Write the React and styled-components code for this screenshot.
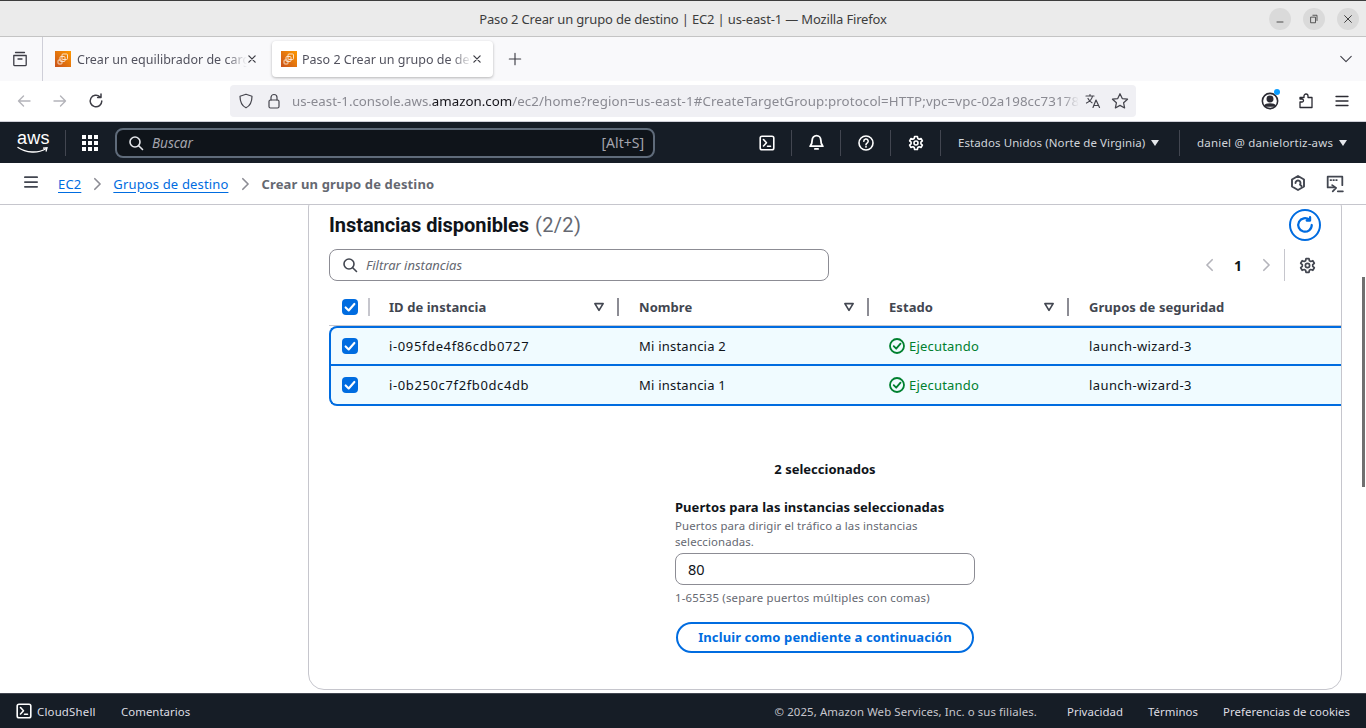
import React from "react";
import styled, { createGlobalStyle } from "styled-components";

const Global = createGlobalStyle`
  html, body { margin: 0; padding: 0; height: 100%; background: #fff; overflow: hidden; }
  * { box-sizing: border-box; }
`;

const BASE_FONT = `"Noto Sans", "Open Sans", sans-serif`;

const Page = styled.div`
  width: 1366px;
  height: 728px;
  display: flex;
  flex-direction: column;
  position: relative;
  overflow: hidden;
  font-family: ${BASE_FONT};
  color: #0f141a;
`;

/* browser window */
const TitleBar = styled.div`
  height: 37px;
  flex: none;
  background: #ebebeb;
  border-top: 1px solid #3d3d3d;
  border-bottom: 1px solid #c4c4c4;
  display: flex;
  align-items: center;
  justify-content: center;
  position: relative;
  font-size: 13px;
  letter-spacing: -0.16px;
  color: #3d3d3d;
`;
const WindowButtons = styled.div`
  position: absolute;
  right: 7px;
  top: 7px;
  display: flex;
  gap: 12px;
`;
const WindowButton = styled.div`
  width: 22px;
  height: 22px;
  border-radius: 50%;
  background: #dadada;
  display: flex;
  align-items: center;
  justify-content: center;
`;
const TabStrip = styled.div`
  height: 44px;
  flex: none;
  background: #f9f9fb;
  display: flex;
  align-items: stretch;
  font-size: 12.5px;
  color: #52525e;
`;
const TabSide = styled.div`
  width: 43px;
  border-right: 1px solid #cfcfd8;
  display: flex;
  align-items: center;
  justify-content: center;
  padding-right: 3px;
`;
const Tab = styled.div`
  width: ${p => p.$width}px;
  margin: 4px 0 4px ${p => p.$gap}px;
  border-radius: 4px;
  padding: 0 11px 0 ${p => p.$pad}px;
  display: flex;
  align-items: center;
  background: ${p => (p.$active ? "#fff" : "transparent")};
  box-shadow: ${p => (p.$active ? "0 1px 3px rgba(0,0,0,.28)" : "none")};
`;
const TabLabel = styled.span`
  flex: 1;
  margin-left: ${p => p.$gap}px;
  white-space: nowrap;
  overflow: hidden;
  -webkit-mask-image: linear-gradient(to right, #000 88%, transparent);
  mask-image: linear-gradient(to right, #000 88%, transparent);
`;
const NewTab = styled.div`
  width: 44px;
  display: flex;
  align-items: center;
  justify-content: center;
`;
const TabEnd = styled.div`
  margin-left: auto;
  width: 40px;
  display: flex;
  align-items: center;
  justify-content: center;
`;
const NavBar = styled.div`
  height: 41px;
  flex: none;
  background: #fff;
  border-bottom: 1px solid #cfcfd8;
  display: flex;
  align-items: center;
`;
const NavButton = styled.div`
  width: 36px;
  height: 32px;
  display: flex;
  align-items: center;
  justify-content: center;
  position: relative;
`;
const NavLeft = styled.div`
  display: flex;
  width: 230px;
  padding-left: 6px;
`;
const UrlBar = styled.div`
  width: 906px;
  height: 32px;
  background: #f0f0f4;
  border-radius: 4px;
  display: flex;
  align-items: center;
  padding: 0 7px 0 8px;
  font-size: 13.3px;
  color: #8a8a92;
`;
const UrlIcons = styled.div`
  display: flex;
  align-items: center;
  gap: 12px;
  width: 54px;
  flex: none;
`;
const UrlText = styled.div`
  flex: 1;
  min-width: 0;
  white-space: nowrap;
  overflow: hidden;
  -webkit-mask-image: linear-gradient(to right, #000 98%, transparent);
  mask-image: linear-gradient(to right, #000 98%, transparent);
  b { font-weight: 400; color: #15141a; }
`;
const UrlPath = styled.span`
  letter-spacing: 0.12px;
`;
const UrlTrail = styled.div`
  display: flex;
  align-items: center;
  gap: 10px;
  margin-left: 6px;
  flex: none;
`;
const NavRight = styled.div`
  margin-left: auto;
  display: flex;
  padding-right: 6px;
`;
const Dot = styled.span`
  position: absolute;
  top: 4px;
  right: 8px;
  width: 6px;
  height: 6px;
  border-radius: 50%;
  background: #0a9dff;
`;

/* aws console header */
const TopNav = styled.div`
  height: 41px;
  flex: none;
  background: #161d26;
  display: flex;
  align-items: center;
  color: #d1d5db;
  font-size: 11.5px;
`;
const LogoBox = styled.div`
  width: 66px;
  height: 26px;
  padding-left: 17px;
  border-right: 1px solid #424650;
  flex: none;
`;
const LogoWord = styled.div`
  font-family: "Liberation Sans", sans-serif;
  font-size: 18px;
  line-height: 15px;
  color: #fff;
  letter-spacing: 0.2px;
  margin-top: 1px;
`;
const GridBox = styled.div`
  width: 49px;
  padding-right: 1px;
  display: flex;
  justify-content: center;
  flex: none;
`;
const SearchBox = styled.div`
  width: 540px;
  height: 30px;
  flex: none;
  background: #0f141a;
  border: 2px solid #5f6b7a;
  border-radius: 8px;
  display: flex;
  align-items: center;
  padding: 0 9px 0 11px;
  font-size: 13.5px;
  color: #a4a4ad;
`;
const SearchHint = styled.i`
  margin-left: 8px;
  flex: 1;
`;
const SearchKeys = styled.span`
  font-size: 14px;
`;
const NavIcons = styled.div`
  display: flex;
  align-items: center;
  margin-left: 87px;
`;
const NavIcon = styled.div`
  width: 50px;
  height: 26px;
  display: flex;
  align-items: center;
  justify-content: center;
  border-right: 1px solid #424650;
  &:nth-child(2) { width: 49px; }
`;
const NavMenu = styled.div`
  height: 26px;
  display: flex;
  align-items: center;
  white-space: nowrap;
  padding-left: ${p => p.$pad}px;
  width: ${p => p.$width}px;
  letter-spacing: ${p => p.$track}px;
  border-right: ${p => (p.$sep ? "1px solid #424650" : "none")};
`;
const Caret = styled.span`
  width: 0;
  height: 0;
  margin-left: ${p => p.$gap}px;
  border-left: 4.5px solid transparent;
  border-right: 4.5px solid transparent;
  border-top: 6px solid #e5e7eb;
`;

/* breadcrumbs */
const Breadcrumbs = styled.div`
  height: 42px;
  flex: none;
  background: #fff;
  border-bottom: 1px solid #c6c6cd;
  display: flex;
  align-items: center;
  padding-left: 24px;
  font-size: 13px;
  letter-spacing: 0.15px;
`;
const MenuToggle = styled.div`
  margin: 0 20px 4px 0;
`;
const Crumb = styled.a`
  color: #006ce0;
  text-decoration: underline;
  text-underline-offset: 3px;
`;
const CrumbCurrent = styled.span`
  color: #656871;
  font-weight: 700;
`;
const CrumbSep = styled.div`
  width: ${p => p.$width}px;
  display: flex;
  justify-content: center;
`;
const BreadcrumbIcons = styled.div`
  margin-left: auto;
  display: flex;
  gap: 20px;
  padding-right: 22px;
`;

/* content */
const Main = styled.main`
  flex: 1;
  min-height: 0;
  background: #fff;
  overflow: hidden;
  padding: 0 24px 0 308px;
`;
const Card = styled.section`
  height: 499px;
  margin-top: -14px;
  border: 1px solid #c6c6cd;
  border-radius: 16px;
  background: #fff;
  padding: 17px 0 0 20px;
  overflow: hidden;
`;
const CardHead = styled.div`
  height: 32px;
  display: flex;
  align-items: center;
  justify-content: space-between;
  padding-right: 20px;
`;
const Title = styled.h2`
  margin: 0;
  font-family: Roboto, ${BASE_FONT};
  font-size: 20px;
  font-weight: 700;
  letter-spacing: -0.05px;
  color: #0f141a;
  span { font-weight: 400; color: #656871; letter-spacing: 0.35px; margin-left: 1px; }
`;
const RefreshButton = styled.div`
  width: 32px;
  height: 32px;
  border: 2px solid #006ce0;
  border-radius: 50%;
  display: flex;
  align-items: center;
  justify-content: center;
`;
const Tools = styled.div`
  margin-top: 8px;
  height: 32px;
  display: flex;
  align-items: center;
  justify-content: space-between;
`;
const FilterBox = styled.div`
  width: 500px;
  height: 32px;
  border: 1px solid #8c8c94;
  border-radius: 8px;
  display: flex;
  align-items: center;
  gap: 8px;
  padding-left: 12px;
  font-size: 13px;
  font-style: italic;
  color: #656871;
`;
const Pager = styled.div`
  display: flex;
  align-items: center;
  height: 32px;
  padding-right: 25px;
  font-size: 14px;
  font-weight: 700;
`;
const PageNumber = styled.span`
  width: 42px;
  text-align: center;
`;
const PagerGear = styled.div`
  margin-left: 11px;
  height: 32px;
  padding-left: 14px;
  border-left: 1px solid #c6c6cd;
  display: flex;
  align-items: center;
`;
const Table = styled.div`
  margin-top: 8px;
`;
const HeadRow = styled.div`
  display: grid;
  grid-template-columns: 60px 250px 250px 200px 1fr;
  height: 37px;
  border-bottom: 1px solid #c6c6cd;
  font-size: 13px;
  font-weight: 700;
  letter-spacing: 0.06px;
  color: #424650;
`;
const HeadCell = styled.div`
  display: flex;
  align-items: center;
  justify-content: space-between;
  padding-right: 20px;
`;
const HeadCheck = styled.div`
  display: flex;
  align-items: center;
  gap: 10px;
  padding-left: 13px;
`;
const ColumnSep = styled.span`
  width: 2px;
  height: 18px;
  background: ${p => (p.$dark ? "#8c8c94" : "#c6c6cd")};
`;
const SortGroup = styled.span`
  display: flex;
  align-items: center;
  gap: 12px;
`;
const Row = styled.div`
  display: grid;
  grid-template-columns: 58px 250px 250px 200px 1fr;
  height: ${p => (p.$last ? 42 : 40)}px;
  margin-top: ${p => (p.$last ? -2 : 0)}px;
  background: #f0fbff;
  border: 2px solid #006ce0;
  border-right: none;
  border-radius: ${p => (p.$last ? "0 0 0 8px" : "8px 0 0 0")};
  align-items: center;
  font-size: 13px;
  color: #0f141a;
`;
const RowCheck = styled.div`
  display: flex;
  padding-left: 11px;
`;
const Cell = styled.div`
  letter-spacing: ${p => p.$track}px;
`;
const CheckBox = styled.div`
  width: 16px;
  height: 16px;
  border-radius: 4px;
  background: #006ce0;
  display: flex;
  align-items: center;
  justify-content: center;
`;
const Status = styled.div`
  display: flex;
  align-items: center;
  gap: 4px;
  letter-spacing: 0.2px;
  color: #00802f;
`;
const Selected = styled.div`
  margin-top: 54px;
  padding-right: 20px;
  text-align: center;
  font-size: 13px;
  font-weight: 700;
  line-height: 18px;
`;
const Form = styled.div`
  width: 300px;
  margin: 20px 0 0 346px;
`;
const FieldLabel = styled.div`
  font-size: 13px;
  font-weight: 700;
  line-height: 18px;
  letter-spacing: 0.05px;
`;
const FieldHelp = styled.div`
  font-size: 11.4px;
  line-height: 16px;
  letter-spacing: 0.12px;
  color: #656871;
  margin-top: 2px;
`;
const PortInput = styled.div`
  margin-top: 3px;
  height: 32px;
  border: 1px solid #8c8c94;
  border-radius: 8px;
  display: flex;
  align-items: center;
  padding: 0 0 1px 12px;
  font-size: 14.5px;
`;
const FieldHint = styled.div`
  margin-top: 5px;
  font-size: 11.4px;
  line-height: 16px;
  letter-spacing: 0.2px;
  color: #656871;
`;
const PrimaryOutline = styled.div`
  margin: 16px 1px 0;
  height: 31px;
  padding-bottom: 1px;
  border: 2px solid #006ce0;
  border-radius: 20px;
  color: #006ce0;
  font-size: 13px;
  font-weight: 700;
  letter-spacing: 0.1px;
  display: flex;
  align-items: center;
  justify-content: center;
`;

/* footer */
const Footer = styled.footer`
  height: 35px;
  flex: none;
  background: #161d26;
  border-top: 1px solid #424650;
  display: flex;
  align-items: center;
  padding: 0 16px;
  font-size: 11.4px;
  letter-spacing: 0.05px;
  color: #dedee3;
`;
const FooterShell = styled.div`
  display: flex;
  align-items: center;
  gap: 5px;
  width: 105px;
  letter-spacing: 0.2px;
`;
const FooterRight = styled.div`
  margin-left: auto;
  display: flex;
  gap: 25px;
  span:first-child { color: #c6c6cd; margin-right: 5px; letter-spacing: 0.1px; }
`;
const Scrollbar = styled.div`
  position: absolute;
  right: 1px;
  top: 277px;
  width: 3px;
  height: 210px;
  background: #707070;
`;

const Ic = ({ size = 16, children, stroke = "#5b5b66", sw = 1.4, fill = "none" }) => (
  <svg width={size} height={size} viewBox="0 0 16 16" fill={fill} stroke={stroke} strokeWidth={sw} strokeLinecap="round" strokeLinejoin="round" style={{ display: "block", flex: "none" }}>
    {children}
  </svg>
);

const Favicon = () => (
  <svg width="16" height="16" viewBox="0 0 16 16" style={{ display: "block", flex: "none" }}>
    <defs>
      <linearGradient id="ec2" x1="0" y1="1" x2="1" y2="0">
        <stop offset="0" stopColor="#c8511b" />
        <stop offset="1" stopColor="#ff9900" />
      </linearGradient>
    </defs>
    <rect width="16" height="16" fill="url(#ec2)" />
    <g fill="none" stroke="#fff" strokeWidth="0.9" opacity="0.85">
      <rect x="7" y="3" width="5.500" height="5.500" rx="1" />
      <rect x="5" y="5.500" width="5" height="5" rx="1" />
      <rect x="3" y="9" width="4" height="4" rx="0.8" />
    </g>
  </svg>
);

const SearchIcon = ({ color, size = 16 }) => (
  <Ic size={size} stroke={color} sw={1.6}>
    <circle cx="7" cy="7" r="5" />
    <path d="M10.7 10.7 14.5 14.5" />
  </Ic>
);

const Gear = ({ color, size = 16 }) => (
  <Ic size={size} stroke={color} sw={1.6}>
    <path d="M6.6 1.5h2.8l.4 2 1.3.7 1.9-.7 1.4 2.4-1.5 1.3v1.6l1.5 1.3-1.4 2.4-1.9-.7-1.3.7-.4 2H6.6l-.4-2-1.3-.7-1.9.7-1.4-2.4 1.5-1.3V7.2L1.6 5.9 3 3.5l1.9.7 1.3-.7z" />
    <circle cx="8" cy="8" r="2" />
  </Ic>
);

const Chevron = ({ dir = "right", color = "#8c8c94", size = 16 }) => (
  <Ic size={size} stroke={color} sw={1.9}>
    <path d={dir === "right" ? "M5.5 2 11.5 8l-6 6" : "M10.5 2 4.5 8l6 6"} />
  </Ic>
);

const Tick = () => (
  <Ic size={14} stroke="#fff" sw={2.4}>
    <path d="M3 8.5 6.5 12 13 4.5" />
  </Ic>
);

const SortIcon = () => (
  <Ic size={12} stroke="#424650" sw={2.2}>
    <path d="M2.500 3.500h11L8 12.500z" />
  </Ic>
);

const RunningIcon = () => (
  <Ic size={16} stroke="#00802f" sw={1.8}>
    <circle cx="8" cy="8" r="7" />
    <path d="M4.7 8.2 7.2 10.7 11.5 5.6" />
  </Ic>
);

const ShellIcon = ({ size = 16 }) => (
  <Ic size={size} stroke="#fff" sw={1.6}>
    <rect x="1.2" y="1.2" width="13.6" height="13.6" rx="1.8" />
    <path d="M4.5 4.5 7.5 7.8 4.5 11M8.5 11.2h3" />
  </Ic>
);

const rows = [
  { id: "i-095fde4f86cdb0727", name: "Mi instancia 2" },
  { id: "i-0b250c7f2fb0dc4db", name: "Mi instancia 1", last: true },
];

const App = () => (
  <Page>
    <Global />
    <TitleBar>
      Paso 2 Crear un grupo de destino | EC2 | us-east-1 — Mozilla Firefox
      <WindowButtons>
        <WindowButton>
          <Ic size={12} stroke="#3d3d3d" sw={1.2}><path d="M4 12h8" /></Ic>
        </WindowButton>
        <WindowButton>
          <Ic size={12} stroke="#3d3d3d" sw={1.1}><rect x="4" y="5.5" width="6" height="7.5" /><path d="M6.5 3h5.5v7" /></Ic>
        </WindowButton>
        <WindowButton>
          <Ic size={12} stroke="#3d3d3d" sw={1.3}><path d="M3.5 3.5 12.5 12.5M12.5 3.5 3.5 12.5" /></Ic>
        </WindowButton>
      </WindowButtons>
    </TitleBar>

    <TabStrip>
      <TabSide>
        <Ic size={16} stroke="#3d3d45" sw={1.3}>
          <path d="M3.5 1.5h9M1.8 4.5h12.4v9.2a1 1 0 0 1-1 1H2.8a1 1 0 0 1-1-1zM6 8h4" />
        </Ic>
      </TabSide>
      <Tab $gap={1} $width={224} $pad={11}>
        <Favicon />
        <TabLabel $gap={6}>Crear un equilibrador de carga</TabLabel>
        <Ic size={10} stroke="#3d3d45" sw={2}><path d="M3 3 13 13M13 3 3 13" /></Ic>
      </Tab>
      <Tab $gap={4} $width={221} $pad={9} $active>
        <Favicon />
        <TabLabel $gap={5}>Paso 2 Crear un grupo de destino</TabLabel>
        <Ic size={10} stroke="#3d3d45" sw={2}><path d="M3 3 13 13M13 3 3 13" /></Ic>
      </Tab>
      <NewTab>
        <Ic size={14} stroke="#3d3d45" sw={1.3}><path d="M8 1.5v13M1.5 8h13" /></Ic>
      </NewTab>
      <TabEnd>
        <Ic size={14} stroke="#3d3d45" sw={1.2}><path d="M2 5l6 6 6-6" /></Ic>
      </TabEnd>
    </TabStrip>

    <NavBar>
      <NavLeft>
        <NavButton>
          <Ic stroke="#b4b4ba"><path d="M14 8H2.5M7.5 3 2.5 8l5 5" /></Ic>
        </NavButton>
        <NavButton>
          <Ic stroke="#b4b4ba"><path d="M2 8h11.5M8.5 3l5 5-5 5" /></Ic>
        </NavButton>
        <NavButton>
          <Ic stroke="#3d3d45" sw={1.5}><path d="M13.8 8a5.8 5.8 0 1 1-1.9-4.3M13 1v3.4H9.6" /></Ic>
        </NavButton>
      </NavLeft>
      <UrlBar>
        <UrlIcons>
          <Ic stroke="#45454d" sw={1.2}><path d="M8 1.2 14 3.2c0 5-1.6 9.4-6 11.6C3.600 12.600 2 8.200 2 3.200z" /></Ic>
          <Ic stroke="#45454d" sw={1.2}><rect x="3" y="7" width="10" height="8" rx="1.5" /><path d="M5 7V4.500a3 3 0 0 1 6 0V7" /></Ic>
        </UrlIcons>
        <UrlText>
          us-east-1.console.aws.<b>amazon.com</b><UrlPath>/ec2/home?region=us-east-1#CreateTargetGroup:protocol=HTTP;vpc=vpc-02a198cc73178</UrlPath>
        </UrlText>
        <UrlTrail>
          <Ic size={16} stroke="#45454d" sw={1.2}><path d="M1 3h8M5 1.500V3M7.500 3C7 6 4.500 8.500 1.500 10M3 5.500c1 2 2.500 3.500 4 4.300M8 14.500l3-7.500 3.500 7.500M9.200 12.500h4.300" /></Ic>
          <Ic size={18} stroke="#45454d" sw={1.1}><path d="M8 1.500l2 4.300 4.700.6-3.500 3.200.9 4.600L8 11.900l-4.100 2.300.9-4.600L1.300 6.400 6 5.800z" /></Ic>
        </UrlTrail>
      </UrlBar>
      <NavRight>
        <NavButton>
          <Ic size={18} stroke="#2b2b33" sw={1.4}>
            <circle cx="8" cy="8" r="6.800" />
            <circle cx="8" cy="6.200" r="2.400" fill="#2b2b33" />
            <path d="M3.500 12.500c1-2.300 8-2.300 9 0z" fill="#2b2b33" />
          </Ic>
          <Dot />
        </NavButton>
        <NavButton>
          <Ic stroke="#2b2b33" sw={1.3}><path d="M2 14.500V9h2a1.500 1.500 0 0 0 0-3H2V4.500h4V3a2 2 0 0 1 4 0v1.500h4v10z" /></Ic>
        </NavButton>
        <NavButton>
          <Ic stroke="#2b2b33" sw={1.3}><path d="M2 3.500h12M2 8h12M2 12.500h12" /></Ic>
        </NavButton>
      </NavRight>
    </NavBar>

    <TopNav>
      <LogoBox>
        <LogoWord>aws</LogoWord>
        <svg width="32" height="9" viewBox="0 0 32 9" style={{ display: "block" }}>
          <path d="M1 1.500C9 7 21 7.500 28.500 3" fill="none" stroke="#fff" strokeWidth="1.400" strokeLinecap="round" />
          <path d="M26 2.200 30 1.800 29 5.500" fill="none" stroke="#fff" strokeWidth="1.300" />
        </svg>
      </LogoBox>
      <GridBox>
        <svg width="16" height="16" viewBox="0 0 16 16" fill="#fff" style={{ display: "block" }}>
          {[0, 6, 12].map(y => [0, 6, 12].map(x => <rect key={`${x}-${y}`} x={x} y={y} width="4" height="4" />))}
        </svg>
      </GridBox>
      <SearchBox>
        <SearchIcon color="#e5e7eb" />
        <SearchHint>Buscar</SearchHint>
        <SearchKeys>[Alt+S]</SearchKeys>
      </SearchBox>
      <NavIcons>
        <NavIcon><ShellIcon /></NavIcon>
        <NavIcon>
          <Ic stroke="#fff" sw={1.7} size={17}>
            <path d="M8 1.500a4 4 0 0 1 4 4c0 3 .7 4.500 2 6H2c1.300-1.500 2-3 2-6a4 4 0 0 1 4-4zM6.500 14h3" />
          </Ic>
        </NavIcon>
        <NavIcon>
          <Ic stroke="#fff" sw={1.6}>
            <circle cx="8" cy="8" r="7" />
            <path d="M5.800 6.200a2.200 2.200 0 1 1 3.300 1.900C8.300 8.600 8 9 8 9.800M8 11.500v.6" />
          </Ic>
        </NavIcon>
        <NavIcon><Gear color="#fff" /></NavIcon>
      </NavIcons>
      <NavMenu $pad={17} $width={239} $track={0.08} $sep>
        Estados Unidos (Norte de Virginia)<Caret $gap={6} />
      </NavMenu>
      <NavMenu $pad={17} $width={186} $track={0.2}>
        daniel @ danielortiz-aws<Caret $gap={6} />
      </NavMenu>
    </TopNav>

    <Breadcrumbs>
      <MenuToggle>
        <Ic size={14} stroke="#424650" sw={2}><path d="M1 2.500h14M1 8h14M1 13.500h14" /></Ic>
      </MenuToggle>
      <Crumb>EC2</Crumb>
      <CrumbSep $width={32}><Chevron size={14} /></CrumbSep>
      <Crumb>Grupos de destino</Crumb>
      <CrumbSep $width={33}><Chevron size={14} /></CrumbSep>
      <CrumbCurrent>Crear un grupo de destino</CrumbCurrent>
      <BreadcrumbIcons>
        <Ic stroke="#424650" sw={1.900}>
          <path d="M8 1 14 4.500v7L8 15 2 11.500v-7z" />
          <path d="M5.500 8a2.500 2.500 0 1 1 4.500 1.500L11.500 11" />
        </Ic>
        <Ic size={18} stroke="#424650" sw={1.600}>
          <path d="M7 11H1.500V1.500h13V9" />
          <path d="M4 4.500h.6M6.500 4.500h.6M9 4.500h.6" />
          <path d="M5.500 9 9 11.500 6 14.500M10.500 14.500H15" />
        </Ic>
      </BreadcrumbIcons>
    </Breadcrumbs>

    <Main>
      <Card>
        <CardHead>
          <Title>Instancias disponibles <span>(2/2)</span></Title>
          <RefreshButton>
            <Ic size={18} stroke="#006ce0" sw={2}><path d="M14 8a6 6 0 1 1-2-4.500M12.500 1v3H9.500" /></Ic>
          </RefreshButton>
        </CardHead>
        <Tools>
          <FilterBox>
            <SearchIcon color="#424650" />
            Filtrar instancias
          </FilterBox>
          <Pager>
            <Chevron dir="left" color="#b4b4bb" size={14} />
            <PageNumber>1</PageNumber>
            <Chevron color="#b4b4bb" size={14} />
            <PagerGear><Gear color="#424650" size={17} /></PagerGear>
          </Pager>
        </Tools>
        <Table>
          <HeadRow>
            <HeadCheck>
              <CheckBox><Tick /></CheckBox>
              <ColumnSep />
            </HeadCheck>
            <HeadCell>ID de instancia<SortGroup><SortIcon /><ColumnSep $dark /></SortGroup></HeadCell>
            <HeadCell>Nombre<SortGroup><SortIcon /><ColumnSep $dark /></SortGroup></HeadCell>
            <HeadCell>Estado<SortGroup><SortIcon /><ColumnSep $dark /></SortGroup></HeadCell>
            <HeadCell>Grupos de seguridad</HeadCell>
          </HeadRow>
          {rows.map(r => (
            <Row key={r.id} $last={r.last}>
              <RowCheck><CheckBox><Tick /></CheckBox></RowCheck>
              <Cell $track={0.62}>{r.id}</Cell>
              <Cell $track={0.22}>{r.name}</Cell>
              <Status><RunningIcon />Ejecutando</Status>
              <Cell $track={0.4}>launch-wizard-3</Cell>
            </Row>
          ))}
        </Table>
        <Selected>2 seleccionados</Selected>
        <Form>
          <FieldLabel>Puertos para las instancias seleccionadas</FieldLabel>
          <FieldHelp>Puertos para dirigir el tráfico a las instancias seleccionadas.</FieldHelp>
          <PortInput>80</PortInput>
          <FieldHint>1-65535 (separe puertos múltiples con comas)</FieldHint>
          <PrimaryOutline>Incluir como pendiente a continuación</PrimaryOutline>
        </Form>
      </Card>
    </Main>

    <Footer>
      <FooterShell><ShellIcon />CloudShell</FooterShell>
      <span>Comentarios</span>
      <FooterRight>
        <span>© 2025, Amazon Web Services, Inc. o sus filiales.</span>
        <span>Privacidad</span>
        <span>Términos</span>
        <span>Preferencias de cookies</span>
      </FooterRight>
    </Footer>
    <Scrollbar />
  </Page>
);

export default App;
